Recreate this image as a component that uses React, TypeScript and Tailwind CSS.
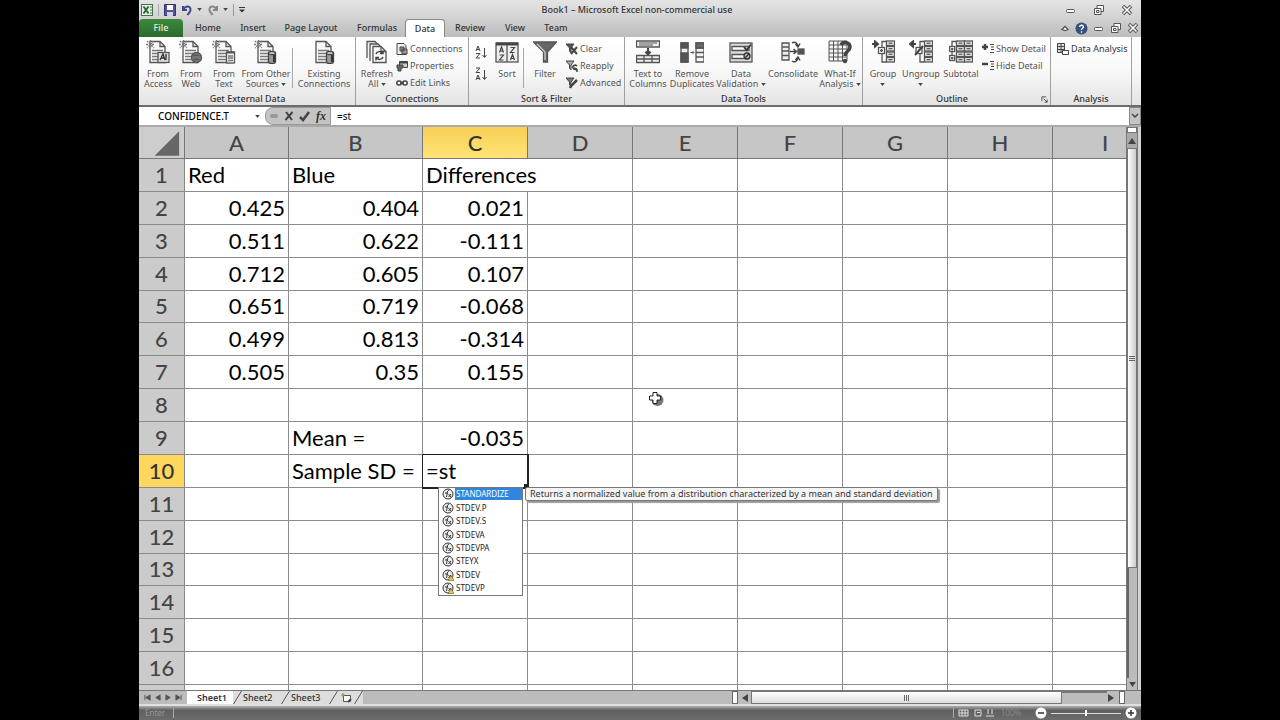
import React from 'react';

const columns = ['A', 'B', 'C', 'D', 'E', 'F', 'G', 'H', 'I'];

const cells: Record<string, string> = {
  A1: 'Red', B1: 'Blue', C1: 'Differences',
  A2: '0.425', B2: '0.404', C2: '0.021',
  A3: '0.511', B3: '0.622', C3: '-0.111',
  A4: '0.712', B4: '0.605', C4: '0.107',
  A5: '0.651', B5: '0.719', C5: '-0.068',
  A6: '0.499', B6: '0.813', C6: '-0.314',
  A7: '0.505', B7: '0.35', C7: '0.155',
  B9: 'Mean =', C9: '-0.035',
  B10: 'Sample SD =',
};

const suggestions = [
  { name: 'STANDARDIZE', legacy: false },
  { name: 'STDEV.P', legacy: false },
  { name: 'STDEV.S', legacy: false },
  { name: 'STDEVA', legacy: false },
  { name: 'STDEVPA', legacy: false },
  { name: 'STEYX', legacy: false },
  { name: 'STDEV', legacy: true },
  { name: 'STDEVP', legacy: true },
];

const tabs = [
  { label: 'Home', width: 'w-[50px]' },
  { label: 'Insert', width: 'w-10' },
  { label: 'Page Layout', width: 'w-[76px]' },
  { label: 'Formulas', width: 'w-14' },
  { label: 'Data', width: 'w-10' },
  { label: 'Review', width: 'w-[50px]' },
  { label: 'View', width: 'w-10' },
  { label: 'Team', width: 'w-[42px]' },
];

/* ---------- icons ---------- */

const Icon = ({ children, className = 'h-6 w-6' }: { children: React.ReactNode; className?: string }) => (
  <svg viewBox="0 0 24 24" className={className} fill="none" stroke="#555" strokeWidth="1.3" aria-hidden="true">
    {children}
  </svg>
);

const SmallIcon = ({ children }: { children: React.ReactNode }) => (
  <svg viewBox="0 0 12 12" className="h-3 w-3 shrink-0" fill="none" stroke="#444" strokeWidth="1" aria-hidden="true">
    {children}
  </svg>
);

// Page with a folded corner and text lines, shared by the data source icons
const Sheet = ({ spark = true }: { spark?: boolean }) => (
  <>
    <path d="M4 1.5h10l5 5v16H4z" fill="#f8f8f8" />
    <path d="M14 1.5v5h5" />
    <path d="M6 10.5h11M6 13.5h11M6 16.5h11M6 19.5h11" stroke="#777" />
    {spark && <path d="M1 1l7 7M8 1L1 8M4.5 0v9M0 4.5h9" stroke="#777" strokeDasharray="2 1" />}
  </>
);

const Cylinder = () => (
  <g fill="#999" stroke="#444">
    <path d="M14.500 13v9c0 2 7 2 7 0v-9" />
    <ellipse cx="18" cy="13" rx="3.500" ry="1.500" fill="#eee" />
    <path d="M20 15v7" stroke="#333" strokeWidth="2" />
  </g>
);

const AccessIcon = () => (
  <Icon>
    <Sheet />
    <rect x="12" y="12.500" width="11" height="10" fill="#ddd" />
    <path d="M14 20l3-6 2 6M15 18h3M20 14v6" stroke="#333" />
  </Icon>
);

const WebIcon = () => (
  <Icon>
    <Sheet />
    <circle cx="17.500" cy="17.500" r="5" fill="#777" stroke="#555" />
    <path d="M14 16c2-2 3 1 6-1M15 20c2-2 3 0 5-1" stroke="#555" />
  </Icon>
);

const TextFileIcon = () => (
  <Icon>
    <Sheet />
    <rect x="14.500" y="12" width="8" height="11" fill="#f4f4f4" />
    <path d="M14.500 12.500h8" strokeWidth="2" />
    <path d="M16 16h5M16 18h5M16 20.500h5" stroke="#777" />
  </Icon>
);

const OtherSourcesIcon = () => (
  <Icon>
    <Sheet />
    <Cylinder />
  </Icon>
);

const ExistingIcon = () => (
  <Icon>
    <Sheet spark={false} />
    <Cylinder />
  </Icon>
);

const RefreshIcon = () => (
  <Icon>
    <path d="M2 18V1.500h8l3 3" fill="#f4f4f4" />
    <path d="M5 21V4h8l3 3" fill="#f4f4f4" />
    <path d="M8 6.500h8l5 5v11H8z" fill="#fafafa" />
    <path d="M16 6.500v5h5" />
    <path d="M11 14c1-3 5-3 6-1M18 10.500v3h-3M18 17c-1 3-5 3-6 1M11 20.500v-3h3" stroke="#444" strokeWidth="1.500" />
  </Icon>
);

const SortIcon = () => (
  <Icon>
    <rect x="1" y="3" width="22" height="19" fill="#eee" />
    <path d="M1 4h22" strokeWidth="3" stroke="#444" />
    <path d="M12 5v17" />
    <path d="M4.500 12.500L6.500 7l2 5.500M5 11h3M4.500 15h4l-4 5h4M15.500 7.500h4l-4 5h4M15.500 20l2-5.500 2 5.500M16 18.500h3" stroke="#444" strokeWidth="1.200" />
  </Icon>
);

const FilterIcon = () => (
  <Icon>
    <path d="M.5 2h23L14.500 12v10h-4V12z" fill="#666" />
    <path d="M4 4l8 8v8" stroke="#ccc" />
  </Icon>
);

const TextColumnsIcon = () => (
  <Icon>
    <path d="M.5 1h23v6H.5z" fill="#eee" />
    <path d="M3 3h18M3 5h14" stroke="#888" />
    <path d="M12 8v6M9.500 11.500l2.500 3 2.500-3" strokeWidth="2" stroke="#444" />
    <path d="M.5 15.500h23v7H.5zM8 15.500v7M16 15.500v7M.5 19h23" fill="#eee" />
  </Icon>
);

const DuplicatesIcon = () => (
  <Icon>
    <path d="M1 3h7v19H1z" fill="#eee" />
    <path d="M1 3h7v5H1zM1 13h7v9H1z" fill="#555" />
    <path d="M10.500 12.500h3M12.500 11l1.500 1.500-1.500 1.500" strokeWidth="1" />
    <path d="M16 3h8v19h-8zM16 8h8M16 12.500h8M16 17h8" fill="#f4f4f4" />
    <path d="M16 3h8v5h-8z" fill="#666" />
  </Icon>
);

const ValidationIcon = () => (
  <Icon>
    <rect x="1" y="3" width="22" height="19" fill="#ddd" />
    <path d="M3 6.500h17v4H3zM3 14.500h17v4H3z" fill="#f8f8f8" />
    <path d="M15 7l2.500 3L22 4.500" strokeWidth="1.800" stroke="#333" />
    <circle cx="18" cy="16" r="3" fill="#bbb" stroke="#333" />
    <path d="M16 18l4-4" stroke="#333" />
  </Icon>
);

const ConsolidateIcon = () => (
  <Icon>
    <path d="M1 3h7v17H1zM1 7h7M1 11h7M1 15.500h7" fill="#eee" />
    <path d="M9 11.500h6M12.500 9l3 2.500-3 2.500" strokeWidth="1.500" stroke="#444" />
    <path d="M11 3c3-2 5 0 6 3M14.500 4l2.500 3 2-3.500M11 21c3 2 5 0 6-3M14.500 20l2.500-3 2 3.500" stroke="#444" strokeWidth="1.500" />
    <rect x="17" y="9" width="6" height="5" fill="#555" />
  </Icon>
);

const WhatIfIcon = () => (
  <Icon>
    <path d="M1 1h18v20H1zM5.500 1v20M10 1v20M14.500 1v20M1 5h18M1 9h18M1 13h18M1 17h18" fill="#f4f4f4" strokeWidth="1" />
    <path d="M13 5c2-4 9-3 9 2 0 4-5 4-5 9" stroke="#444" strokeWidth="3.500" />
    <circle cx="17" cy="21" r="2.200" fill="#444" stroke="none" />
  </Icon>
);

const OutlineRows = ({ x }: { x: number }) => (
  <>
    {[1, 6.5, 12, 17.5].map((y) => (
      <g key={y}>
        <rect x={x} y={y} width="8" height="4.500" fill="#f0f0f0" />
        <path d={`M${x + 2} ${y + 2.2}h4`} />
      </g>
    ))}
  </>
);

const GroupIcon = () => (
  <Icon>
    <path d="M1 4h4M4 1.500L7 4 4 6.500z" strokeWidth="2" stroke="#444" fill="#444" />
    <path d="M15 1.500h-4V7M11 14v8h4" />
    <rect x="7.500" y="7.500" width="6" height="6" fill="#fff" />
    <path d="M9 10.500h3M10.500 9v3" />
    <OutlineRows x={15.5} />
  </Icon>
);

const UngroupIcon = () => (
  <Icon>
    <path d="M3 4h4M4 1.500L1 4l3 2.500z" strokeWidth="2" stroke="#444" fill="#444" />
    <path d="M15 1.500h-4V7M11 14v8h4" />
    <rect x="7" y="7.500" width="6" height="6" fill="#fff" />
    <path d="M6 15L14 6" strokeWidth="2" stroke="#444" />
    <OutlineRows x={15.5} />
  </Icon>
);

const SubtotalIcon = () => (
  <Icon>
    <path d="M7 1.500H3V6M3 12v3" />
    <rect x=".7" y="6.500" width="5" height="5" fill="#fff" />
    <rect x=".7" y="15.500" width="5" height="5" fill="#fff" />
    <path d="M2 9h2.500M3.200 8v2.500M2 18h2.500M3.200 17v2.500" />
    <OutlineRows x={7.5} />
    <OutlineRows x={15.5} />
  </Icon>
);

const FxBadge = ({ legacy }: { legacy: boolean }) => (
  <svg viewBox="0 0 12 12" className="h-3 w-3 shrink-0" fill="none" stroke="#333" strokeWidth="1" aria-hidden="true">
    <circle cx="6" cy="6" r="5" fill="#eee" />
    <path d="M7 2.500c-2-.5-1.500 2-2.500 6.500M3 5h3M6.500 6l2.500 3M9 6L6.500 9" />
    {legacy && <path d="M9 6.500L12 11.500H6z" fill="#e8c84a" stroke="#665a20" strokeWidth=".6" />}
  </svg>
);

/* ---------- ribbon parts ---------- */

const Arrow = () => (
  <svg viewBox="0 0 6 4" className="inline-block h-[3px] w-[5px] align-middle" aria-hidden="true">
    <path d="M0 0h6L3 4z" fill="#444" />
  </svg>
);

interface BigButtonProps {
  icon: React.ReactNode;
  lines: string[];
  width: string;
  menu?: boolean;
}

const BigButton: React.FC<BigButtonProps> = ({ icon, lines, width, menu = false }) => (
  <button className={`flex shrink-0 flex-col items-center whitespace-nowrap ${width}`}>
    {icon}
    <span className="mt-[5px] block leading-[10px]">
      {lines.map((line, i) => (
        <span key={i} className="block">
          {line}
          {menu && i === lines.length - 1 && <> <Arrow /></>}
        </span>
      ))}
    </span>
  </button>
);

const SmallButton = ({ icon, label }: { icon: React.ReactNode; label: string }) => (
  <button className="flex h-[17px] items-center gap-[2px] whitespace-nowrap">
    {icon}
    {label}
  </button>
);

const Divider = () => <span className="mt-2 h-10 w-px shrink-0 bg-[#a8a8a8]" />;

interface GroupProps {
  label: string;
  width: string;
  launcher?: boolean;
  children: React.ReactNode;
}

const Group: React.FC<GroupProps> = ({ label, width, launcher = false, children }) => (
  <section aria-label={label} className={`flex shrink-0 flex-col border-r border-[#a0a0a0] ${width}`}>
    <div className="flex flex-1 items-start pt-[3px] pl-[2px]">{children}</div>
    <div className="flex h-3 items-center justify-center font-medium text-[#333]">
      <span className="flex-1 text-center leading-3">{label}</span>
      {launcher && (
        <button aria-label={`${label} settings`} className="mr-[2px]">
          <svg viewBox="0 0 8 8" className="h-[7px] w-[7px]" fill="none" stroke="#444">
            <path d="M1 6V1h5M3 3l4 4M7 4v3H4" />
          </svg>
        </button>
      )}
    </div>
  </section>
);

const WindowButton = ({ kind }: { kind: 'min' | 'restore' | 'close' }) => (
  <button aria-label={kind} className="flex w-3 items-center justify-center">
    <svg viewBox="0 0 12 12" className="h-3 w-3" fill="none" stroke="#555">
      {kind === 'min' && <rect x="1.500" y="5.500" width="8" height="3" rx="1" fill="#fff" />}
      {kind === 'restore' && <path d="M4 4V1.500h6.500v6H8M1.500 4.500h6.500v6H1.500zM3.500 6.500h2.500v2H3.500z" fill="#fff" />}
      {kind === 'close' && (
        <>
          <path d="M2 2l8 8M10 2L2 10" strokeWidth="3.500" />
          <path d="M2.500 2.500l7 7M9.500 2.500l-7 7" stroke="#fff" strokeWidth="1.500" />
        </>
      )}
    </svg>
  </button>
);

const TitleBar = () => (
  <header className="flex h-[19px] items-center bg-linear-to-b from-[#e4e4e4] to-[#d2d2d2] pr-2 pl-[2px]">
    <div className="flex flex-1 items-center gap-[5px]">
      <svg viewBox="0 0 12 12" className="h-3 w-3" fill="none">
        <rect x=".5" y=".5" width="11" height="11" fill="#e8f0e8" stroke="#47724b" />
        <path d="M2.500 2.500l5 7M7.500 2.500l-5 7" stroke="#2c6a35" strokeWidth="2" />
        <path d="M9 3h2M9 6h2M9 9h2" stroke="#47724b" />
      </svg>
      <span className="h-3 w-px bg-[#aaa]" />
      <button aria-label="Save">
        <svg viewBox="0 0 12 12" className="h-3 w-3">
          <path d="M.5.5h11v11H.5z" fill="#55559c" stroke="#33336b" />
          <path d="M3 1h6v5H3z" fill="#fff" />
          <path d="M3 8h6v4H3z" fill="#cfd0e8" />
        </svg>
      </button>
      <button aria-label="Undo" className="flex items-center gap-1">
        <svg viewBox="0 0 12 12" className="h-3 w-3" fill="none" stroke="#3e4a86" strokeWidth="2">
          <path d="M2 2v4h4M2.500 5.500C5 1 10 2 9.500 6c0 2-2 3-3 5" />
        </svg>
        <Arrow />
      </button>
      <button aria-label="Redo" className="flex items-center gap-1">
        <svg viewBox="0 0 12 12" className="h-3 w-3" fill="none" stroke="#888" strokeWidth="2">
          <path d="M10 2v4H6M9.500 5.500C7 1 2 2 2.500 6c0 2 2 3 3 5" />
        </svg>
        <Arrow />
      </button>
      <span className="h-3 w-px bg-[#999]" />
      <button aria-label="Customize toolbar">
        <svg viewBox="0 0 6 6" className="h-[6px] w-[6px]">
          <path d="M0 0h6v1H0zM0 2.500h6L3 5.500z" fill="#333" />
        </svg>
      </button>
    </div>
    <h1 className="text-[9px] font-medium text-[#333]">Book1 – Microsoft Excel non-commercial use</h1>
    <div className="flex flex-1 justify-end gap-4">
      <WindowButton kind="min" />
      <WindowButton kind="restore" />
      <WindowButton kind="close" />
    </div>
  </header>
);

const TabBar = () => (
  <nav className="flex h-[18px] items-stretch bg-linear-to-b from-[#d0d0d0] to-[#bdbdbd] text-[9px] font-medium text-[#333]">
    <button className="w-11 rounded-t-sm bg-linear-to-b from-[#3c8a3e] to-[#2a6a2c] text-[#e4f0e4]">File</button>
    {tabs.map((tab) => (
      <button
        key={tab.label}
        className={`${tab.width} whitespace-nowrap ${
          tab.label === 'Data' ? 'rounded-t-sm border border-b-0 border-[#888] bg-white' : ''
        }`}
      >
        {tab.label}
      </button>
    ))}
    <div className="flex flex-1 items-center justify-end gap-[5px] pr-[2px]">
      <button aria-label="Minimize ribbon">
        <svg viewBox="0 0 10 10" className="h-[10px] w-[10px]" fill="none" stroke="#555" strokeWidth="1.300">
          <path d="M2 6.500L5 3.500l3 3L5 7.500z" fill="#fff" />
        </svg>
      </button>
      <button aria-label="Help">
        <svg viewBox="0 0 14 14" className="h-[13px] w-[13px]" fill="none">
          <circle cx="7" cy="7" r="6.500" fill="#34507c" />
          <path d="M5 5.500c0-3 4.500-2.500 4 0-.2 1.200-2 1.300-2 3M7 10v1.500" stroke="#fff" strokeWidth="1.500" />
        </svg>
      </button>
      <WindowButton kind="min" />
      <WindowButton kind="restore" />
      <WindowButton kind="close" />
    </div>
  </nav>
);

const Ribbon = () => (
  <div className="flex h-[70px] overflow-hidden border-b-2 border-[#6c6c6c] bg-linear-to-b from-white via-[#f8f8f8] to-[#e4e4e4] pl-px text-[9px] text-[#555]">
    <Group label="Get External Data" width="w-[216px]">
      <BigButton icon={<AccessIcon />} lines={['From', 'Access']} width="w-8" />
      <BigButton icon={<WebIcon />} lines={['From', 'Web']} width="w-[34px]" />
      <BigButton icon={<TextFileIcon />} lines={['From', 'Text']} width="w-8" />
      <BigButton icon={<OtherSourcesIcon />} lines={['From Other', 'Sources']} width="w-[52px]" menu />
      <Divider />
      <BigButton icon={<ExistingIcon />} lines={['Existing', 'Connections']} width="w-[62px]" />
    </Group>
    <Group label="Connections" width="w-[113px]">
      <BigButton icon={<RefreshIcon />} lines={['Refresh', 'All']} width="w-[38px]" menu />
      <div className="flex flex-col">
        <SmallButton
          label="Connections"
          icon={
            <SmallIcon>
              <path d="M1 .5h7l2 2v9H1z" fill="#eee" />
              <path d="M4 4h4v4H4zM6 6h5v5H6z" fill="#999" />
            </SmallIcon>
          }
        />
        <SmallButton
          label="Properties"
          icon={
            <SmallIcon>
              <path d="M3.500 1.500h8v6h-8z" fill="#ccc" />
              <path d="M3.500 2.500h8" strokeWidth="2" />
              <path d="M1 5h6v3H5v3H2V8H1z" fill="#666" />
            </SmallIcon>
          }
        />
        <SmallButton
          label="Edit Links"
          icon={
            <SmallIcon>
              <rect x=".8" y="4" width="4.500" height="4" rx="2" strokeWidth="1.500" />
              <rect x="6.700" y="4" width="4.500" height="4" rx="2" strokeWidth="1.500" />
              <path d="M4 6h4" strokeWidth="1.500" />
            </SmallIcon>
          }
        />
      </div>
    </Group>
    <Group label="Sort & Filter" width="w-[156px]">
      <div className="flex w-5 flex-col items-center gap-2 pt-[5px]">
        <button aria-label="Sort A to Z">
          <svg viewBox="0 0 14 14" className="h-[14px] w-[14px]" fill="none" stroke="#444">
            <path d="M2 6l2-5 2 5M2.500 4.500h3M2 8.500h4l-4 4.500h4M10.500 3v9M8.500 10l2 2.500 2-2.500" />
          </svg>
        </button>
        <button aria-label="Sort Z to A">
          <svg viewBox="0 0 14 14" className="h-[14px] w-[14px]" fill="none" stroke="#444">
            <path d="M2 1h4L2 5.500h4M2 13l2-5 2 5M2.500 11.500h3M10.500 3v9M8.500 10l2 2.500 2-2.500" />
          </svg>
        </button>
      </div>
      <BigButton icon={<SortIcon />} lines={['Sort']} width="w-8" />
      <Divider />
      <BigButton icon={<FilterIcon />} lines={['Filter']} width="w-[42px]" />
      <div className="flex flex-col">
        <SmallButton
          label="Clear"
          icon={
            <SmallIcon>
              <path d="M0 1h8L5 5v5L3.500 8V5z" fill="#555" />
              <path d="M5 4l6 7M11 4l-6 7" strokeWidth="2" />
            </SmallIcon>
          }
        />
        <SmallButton
          label="Reapply"
          icon={
            <SmallIcon>
              <path d="M0 1h8L5 5v5L3.500 8V5z" fill="#aaa" />
              <path d="M11 6c-2-2-5 0-4 2s4 2 4 1M11 9l-3-1M11 9v3" strokeWidth="1.500" />
            </SmallIcon>
          }
        />
        <SmallButton
          label="Advanced"
          icon={
            <SmallIcon>
              <path d="M0 1h8L5 5v3L3.500 8V5z" fill="#777" />
              <path d="M4 11l1-2 6-6" strokeWidth="2.500" />
            </SmallIcon>
          }
        />
      </div>
    </Group>
    <Group label="Data Tools" width="w-[238px]">
      <BigButton icon={<TextColumnsIcon />} lines={['Text to', 'Columns']} width="w-[42px]" />
      <BigButton icon={<DuplicatesIcon />} lines={['Remove', 'Duplicates']} width="w-[46px]" />
      <BigButton icon={<ValidationIcon />} lines={['Data', 'Validation']} width="w-[52px]" menu />
      <BigButton icon={<ConsolidateIcon />} lines={['Consolidate']} width="w-[52px]" />
      <BigButton icon={<WhatIfIcon />} lines={['What-If', 'Analysis']} width="w-[42px]" menu />
    </Group>
    <Group label="Outline" width="w-[188px]" launcher>
      <BigButton icon={<GroupIcon />} lines={['Group', '']} width="w-9" menu />
      <BigButton icon={<UngroupIcon />} lines={['Ungroup', '']} width="w-10" menu />
      <BigButton icon={<SubtotalIcon />} lines={['Subtotal']} width="w-10" />
      <div className="flex flex-col pl-px">
        <SmallButton
          label="Show Detail"
          icon={
            <SmallIcon>
              <path d="M0 4h6M3 1v6" strokeWidth="2.500" />
              <path d="M8 1.500h4M9 4h3M9 6.500h3M8 9.500h4" />
            </SmallIcon>
          }
        />
        <SmallButton
          label="Hide Detail"
          icon={
            <SmallIcon>
              <path d="M0 4h6" strokeWidth="2.500" />
              <path d="M8 1.500h4M9 4h3M9 6.500h3M8 9.500h4" />
            </SmallIcon>
          }
        />
      </div>
    </Group>
    <Group label="Analysis" width="w-[81px]">
      <div className="pl-1 text-[#333]">
        <SmallButton
          label="Data Analysis"
          icon={
            <SmallIcon>
              <path d="M.5.5h7v9h-7zM.5 3.500h7M.5 6.500h7M4 .5v9" fill="#ddd" />
              <path d="M5.500 7.500h6v4h-6z" fill="#fff" />
            </SmallIcon>
          }
        />
      </div>
    </Group>
  </div>
);

const FormulaBar = () => (
  <div className="flex h-[18px] bg-white text-[10px] text-black">
    <input
      aria-label="Name box"
      defaultValue="CONFIDENCE.T"
      className="w-[110px] pl-[19px] font-medium outline-none"
    />
    <button aria-label="Name box list" className="flex w-4 items-center justify-center">
      <Arrow />
    </button>
    <div className="mr-[6px] flex w-[66px] items-center justify-between rounded-l-lg border border-[#999] bg-[#c4c4c4] px-1">
      <span className="h-1 w-2 rounded-sm bg-[#999]" />
      <button aria-label="Cancel">
        <svg viewBox="0 0 12 12" className="h-3 w-3" fill="none" stroke="#444" strokeWidth="2">
          <path d="M3 2l6 8M9.500 2L2.500 10" />
        </svg>
      </button>
      <button aria-label="Enter">
        <svg viewBox="0 0 12 12" className="h-3 w-3" fill="none" stroke="#444" strokeWidth="2.500">
          <path d="M1 7l3 3 6-8" />
        </svg>
      </button>
      <button aria-label="Insert function" className="font-['Liberation_Serif',serif] text-[12px] font-bold text-[#333] italic">
        fx
      </button>
    </div>
    <input aria-label="Formula bar" defaultValue="=st" className="min-w-0 flex-1 outline-none" />
    <button aria-label="Expand formula bar" className="flex w-3 items-center justify-center border border-[#888] bg-[#c4c4c4]">
      <svg viewBox="0 0 8 8" className="h-2 w-2" fill="none" stroke="#444" strokeWidth="1.500">
        <path d="M1 2l3 3 3-3" />
      </svg>
    </button>
  </div>
);

/* ---------- worksheet ---------- */

const Autocomplete = () => (
  <div className="absolute top-full left-[15px] z-10 flex items-start gap-[2px] font-['Noto_Sans',sans-serif]">
    <ul
      role="listbox"
      aria-label="Functions"
      className="grid h-[109px] w-[85px] grid-rows-8 border border-[#777] bg-white pl-[3px] text-[8px] text-[#222]"
    >
      {suggestions.map(({ name, legacy }, i) => (
        <li key={name} role="option" aria-selected={i === 0} className="flex items-center gap-px leading-3">
          <FxBadge legacy={legacy} />
          <span className={`flex-1 pl-px ${i === 0 ? 'bg-[#2f86dc] text-white' : ''}`}>{name}</span>
        </li>
      ))}
    </ul>
    <div
      role="tooltip"
      className="rounded-xs border border-[#777] bg-[#f4f4f4] px-1 text-[9px] leading-3 whitespace-nowrap text-[#333] shadow-[2px_2px_1px_#999]"
    >
      Returns a normalized value from a distribution characterized by a mean and standard deviation
    </div>
  </div>
);

const Grid = () => (
  <div className="relative min-w-0 flex-1 overflow-hidden bg-white font-['Lato','Noto_Sans',sans-serif] text-[22px] leading-6">
    <table className="h-[591px] w-[1019px] table-fixed border-separate border-spacing-0">
      <colgroup>
        <col className="w-[46px]" />
        <col className="w-[104px]" />
        <col className="w-[134px]" />
        {columns.slice(2).map((c) => (
          <col key={c} className="w-[105px]" />
        ))}
      </colgroup>
      <thead>
        <tr className="h-8">
          <th aria-label="Select all" className="border-r border-b border-[#777] bg-[#cdcdcd] p-0">
            <svg viewBox="0 0 46 30" className="ml-auto h-[30px] w-[45px]" aria-hidden="true">
              <path d="M41 3v25H16z" fill="#666" />
            </svg>
          </th>
          {columns.map((c) => (
            <th
              key={c}
              scope="col"
              className={`border-r border-b border-[#777] p-0 font-medium ${
                c === 'C' ? 'bg-linear-to-b from-[#f8cf55] to-[#ffe377] text-[#333]' : 'bg-[#c6c6c6] text-[#444]'
              }`}
            >
              {c}
            </th>
          ))}
        </tr>
      </thead>
      <tbody>
        {Array.from({ length: 17 }, (_, r) => r + 1).map((row) => (
          <tr key={row}>
            <th
              scope="row"
              className={`border-r border-b border-[#888] p-0 font-medium ${
                row === 10 ? 'bg-[#ffd75e] text-[#333]' : 'bg-[#cbcbcb] text-[#444]'
              }`}
            >
              {row <= 16 ? row : '\u00a0'}
            </th>
            {columns.map((c) => {
              const value = cells[`${c}${row}`] ?? '';
              if (c === 'C' && row === 10) {
                return (
                  <td key={c} className="relative border-r border-b border-[#222] p-0 outline outline-[#222]">
                    <input
                      aria-label="C10"
                      defaultValue="=st"
                      className="block h-6 w-full pl-[3px] text-black outline-none"
                    />
                    <span className="absolute right-0 bottom-0 h-[3px] w-[3px] bg-[#222]" />
                    <Autocomplete />
                  </td>
                );
              }
              return (
                <td
                  key={c}
                  className={`border-b border-[#8c8c8c] px-[3px] py-0 whitespace-nowrap text-black ${
                    c === 'C' && row === 1 ? '' : 'border-r'
                  } ${/^-?\d/.test(value) ? 'text-right' : ''}`}
                >
                  {value}
                </td>
              );
            })}
          </tr>
        ))}
      </tbody>
    </table>

    {/* mouse pointer */}
    <svg viewBox="0 0 16 16" className="absolute top-[264px] left-[509px] h-4 w-4" aria-hidden="true">
      <circle cx="9.500" cy="9" r="6" fill="#777" />
      <path d="M5 1.500h4V5h3.500v4H9v3.500H5V9H1.500V5H5z" fill="#fff" stroke="#222" />
    </svg>
  </div>
);

const VerticalScroll = () => (
  <div className="mr-[3px] flex w-3 flex-col border-x border-[#777] bg-[#c4c4c4]">
    <div className="h-[6px] border border-[#777] bg-white" />
    <button aria-label="Scroll up" className="flex h-[15px] items-center justify-center bg-[#aaa]">
      <svg viewBox="0 0 8 6" className="h-[6px] w-2">
        <path d="M4 0l4 6H0z" fill="#444" />
      </svg>
    </button>
    <div className="flex grow-[79] flex-col items-center justify-center gap-px border border-[#777] bg-linear-to-r from-white to-[#ccc]">
      <span className="h-px w-[6px] bg-[#666]" />
      <span className="h-px w-[6px] bg-[#666]" />
      <span className="h-px w-[6px] bg-[#666]" />
    </div>
    <div className="grow-[21] border-l-2 border-[#666] bg-[#bbb]" />
    <button aria-label="Scroll down" className="flex h-3 items-center justify-center bg-[#bbb]">
      <svg viewBox="0 0 8 6" className="h-[5px] w-[7px]">
        <path d="M0 0h8L4 6z" fill="#444" />
      </svg>
    </button>
  </div>
);

const Slant = () => (
  <svg viewBox="0 0 9 13" className="h-[13px] w-[9px] shrink-0 bg-[#ddd]" aria-hidden="true">
    <path d="M.5 13L8.500 0" stroke="#555" />
  </svg>
);

const SheetBar = () => (
  <div className="flex h-[14px] items-stretch border-t border-[#777] bg-[#bcbcbc] text-[9px] font-medium text-[#333]">
    <div className="flex w-12 items-center justify-around px-[3px]">
      {['M7 1v6L2 4zM1 1v6', 'M7 1v6L2 4z', 'M1 1v6l5-3z', 'M1 1v6l5-3zM7 1v6'].map((d, i) => (
        <button key={i} aria-label={['First sheet', 'Previous sheet', 'Next sheet', 'Last sheet'][i]}>
          <svg viewBox="0 0 8 8" className="h-[7px] w-[7px]" fill="#555" stroke="#555">
            <path d={d} />
          </svg>
        </button>
      ))}
    </div>
    <button className="w-[46px] bg-white pl-1 text-center leading-3 font-semibold">Sheet1</button>
    <Slant />
    <button className="w-[39px] bg-[#ddd] pl-px text-left leading-3">Sheet2</button>
    <Slant />
    <button className="w-[39px] bg-[#ddd] pl-px text-left leading-3">Sheet3</button>
    <Slant />
    <button aria-label="Insert sheet" className="flex w-4 items-center justify-center bg-[#ddd]">
      <svg viewBox="0 0 12 10" className="h-[10px] w-3" fill="none" stroke="#555">
        <path d="M3.500 2.500h7v6h-7z" fill="#fff" />
        <path d="M1 2h4M3 0v4" stroke="#a98a2c" />
        <path d="M8 9l3-3" stroke="#445" strokeWidth="2" />
      </svg>
    </button>
    <Slant />
    <div className="flex-1" />
    <div className="flex w-[409px] items-stretch">
      <span className="w-[6px] border border-[#666] bg-white" />
      <button aria-label="Scroll left" className="flex w-[13px] items-center justify-center">
        <svg viewBox="0 0 6 8" className="h-2 w-[6px]">
          <path d="M6 0v8L0 4z" fill="#444" />
        </svg>
      </button>
      <div className="flex w-[311px] items-center justify-center gap-px border border-[#777] bg-linear-to-b from-white to-[#ddd]">
        <span className="h-[6px] w-px bg-[#666]" />
        <span className="h-[6px] w-px bg-[#666]" />
        <span className="h-[6px] w-px bg-[#666]" />
      </div>
      <div className="flex-1 border-t-2 border-[#777]" />
      <button aria-label="Scroll right" className="flex w-2 items-center justify-center">
        <svg viewBox="0 0 6 8" className="h-2 w-[6px]">
          <path d="M0 0v8l6-4z" fill="#444" />
        </svg>
      </button>
      <span className="mr-4 ml-1 w-[6px] border border-[#666] bg-white" />
    </div>
  </div>
);

const StatusBar = () => (
  <footer className="flex h-4 items-center justify-between border-t-2 border-[#e0e0e0] bg-linear-to-b from-[#b0b0b0] via-[#606060] via-30% to-[#6c6c6c] pr-1 pl-[6px] text-[8px] text-[#999]">
    <span className="border-r border-[#aaa] pr-2 leading-[10px]">Enter</span>
    <div className="flex items-center gap-1">
      <svg viewBox="0 0 42 10" className="h-[10px] w-[42px]" fill="none" stroke="#ddd" aria-hidden="true">
        <path d="M.5 0v10" stroke="#aaa" />
        <path d="M6 2h9v6H6zM9 2v6M12 2v6M6 5h9" />
        <path d="M22 2h6v6h-6zM24 4.500h3" />
        <path d="M35 1v5M39 1v5M33 8h8" />
      </svg>
      <span className="w-6 text-center leading-[10px] text-[#888]">100%</span>
      <button aria-label="Zoom out" className="ml-2 h-3 w-3">
        <svg viewBox="0 0 12 12" className="h-3 w-3">
          <circle cx="6" cy="6" r="5.500" fill="#fff" />
          <path d="M3 6h6" stroke="#333" strokeWidth="1.500" />
        </svg>
      </button>
      <input
        type="range"
        aria-label="Zoom"
        defaultValue={50}
        className="h-px w-[70px] appearance-none bg-[#ddd] [&::-webkit-slider-thumb]:h-[6px] [&::-webkit-slider-thumb]:w-[2px] [&::-webkit-slider-thumb]:appearance-none [&::-webkit-slider-thumb]:bg-white"
      />
      <button aria-label="Zoom in" className="h-3 w-3">
        <svg viewBox="0 0 12 12" className="h-3 w-3">
          <circle cx="6" cy="6" r="5.500" fill="#fff" />
          <path d="M3 6h6M6 3v6" stroke="#333" strokeWidth="1.500" />
        </svg>
      </button>
    </div>
  </footer>
);

const App: React.FC = () => {
  return (
    <div className="h-screen bg-black px-[139px] font-['Noto_Sans',sans-serif]">
      <div className="flex h-full flex-col overflow-hidden bg-[#d4d4d4]">
        <TitleBar />
        <TabBar />
        <Ribbon />
        <FormulaBar />
        <main className="flex min-h-0 flex-1 border-t-2 border-[#aaa]">
          <Grid />
          <VerticalScroll />
        </main>
        <SheetBar />
        <StatusBar />
      </div>
    </div>
  );
};

export default App;
